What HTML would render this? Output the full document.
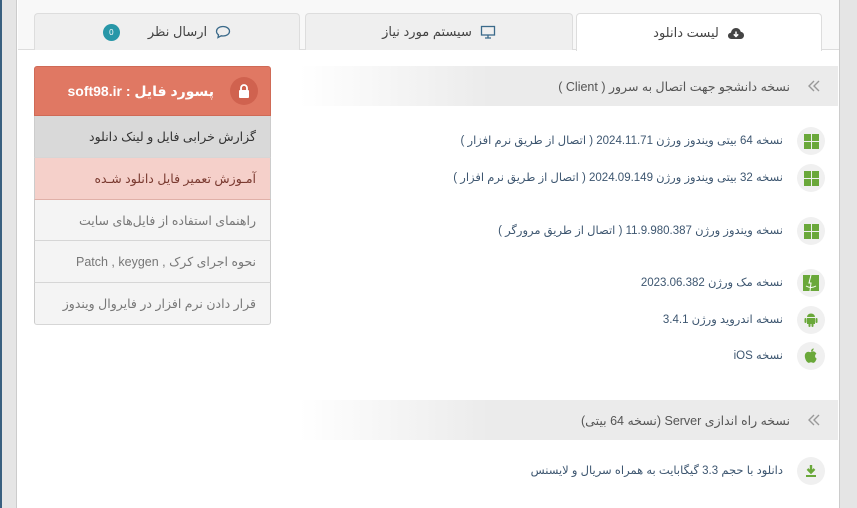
<!DOCTYPE html>
<html><head><meta charset="utf-8"><style>
*{margin:0;padding:0;box-sizing:border-box}
body{width:857px;height:508px;overflow:hidden;background:#fff;font-family:"Liberation Sans","DejaVu Sans",sans-serif;position:relative}
.abs{position:absolute}
.tab{position:absolute;top:13px;height:37px;background:#efefef;border:1px solid #ddd;border-bottom:none;border-radius:4px 4px 0 0;display:flex;align-items:center;justify-content:center;gap:8px;font-size:13px;color:#444;direction:rtl}
.tab.act{background:#fff;height:38px}
.hdr{position:absolute;left:300px;width:538px;height:40px;background:linear-gradient(to right,#fff,#ebebeb 35%);direction:rtl;display:flex;align-items:center;font-size:12.5px;color:#555}
.hdr .ch{width:48px;display:flex;justify-content:center}
.row{position:absolute;right:74px;direction:rtl;font-size:11.5px;color:#3d5670;white-space:nowrap}
.ic{position:absolute;left:797px;width:28px;height:28px;border-radius:50%;background:#f0f0f0;display:flex;align-items:center;justify-content:center}
.box{position:absolute;left:34px;width:237px;direction:rtl;font-size:12.5px;padding-right:14px;display:flex;align-items:center;border-left:1px solid #ccc;border-right:1px solid #ccc;border-bottom:1px solid #d6d6d6}
</style></head><body>
<div class="abs" style="left:0;top:0;width:2px;height:508px;background:#3a6080"></div>
<div class="abs" style="left:2px;top:0;width:15px;height:508px;background:#e5e5e5;border-right:1px solid #ccc"></div>
<div class="abs" style="left:839px;top:0;width:18px;height:508px;background:#e5e5e5;border-left:1px solid #ccc"></div>
<div class="abs" style="left:18px;top:0;width:821px;height:50px;background:#f8f8f8;border-bottom:1px solid #ddd"></div>

<div class="tab" style="left:34px;width:266px"><svg width="16" height="14" viewBox="0 0 16 14"><path d="M8 1.5C4.2 1.5 1.5 3.6 1.5 6.3c0 1.5.8 2.7 2 3.5L3 12.5l3.2-1.7c.6.1 1.2.2 1.8.2 3.8 0 6.5-2.1 6.5-4.7S11.8 1.5 8 1.5z" fill="none" stroke="#3b6a8a" stroke-width="1.3"/></svg><span>ارسال نظر</span><span style="width:17px;height:17px;border-radius:50%;background:#2897a8;color:#fff;font-size:8px;display:flex;align-items:center;justify-content:center;margin-right:20px">0</span></div>
<div class="tab" style="left:305px;width:268px"><svg width="16" height="14" viewBox="0 0 16 14"><rect x="1.5" y="1.5" width="13" height="8.5" fill="none" stroke="#3b6a8a" stroke-width="1.3"/><path d="M5 13h6M8 10v3" stroke="#3b6a8a" stroke-width="1.3"/></svg><span>سیستم مورد نیاز</span></div>
<div class="tab act" style="left:576px;width:246px"><svg width="18" height="14" viewBox="0 0 18 14"><path d="M4.5 13C2.3 13 1 11.6 1 9.8 1 8 2.4 6.8 4 6.8 4.3 4 6.4 2 9 2c2.4 0 4.3 1.6 4.8 3.9 2 .2 3.2 1.6 3.2 3.5 0 2-1.5 3.6-3.5 3.6z" fill="#444"/><path d="M9 5.5v5M6.8 8.3 9 10.5l2.2-2.2" stroke="#fff" stroke-width="1.5" fill="none"/></svg><span>لیست دانلود</span></div>

<div class="hdr" style="top:66px"><span class="ch"><svg width="14" height="14" viewBox="0 0 14 14"><path d="M7 2 2 7l5 5M12 2 7 7l5 5" stroke="#999" stroke-width="1.4" fill="none"/></svg></span><span>نسخه دانشجو جهت اتصال به سرور ( Client )</span></div>
<div class="hdr" style="top:400px"><span class="ch"><svg width="14" height="14" viewBox="0 0 14 14"><path d="M7 2 2 7l5 5M12 2 7 7l5 5" stroke="#999" stroke-width="1.4" fill="none"/></svg></span><span>نسخه راه اندازی Server (نسخه 64 بیتی)</span></div>

<div class="ic" style="top:127px"><svg width="15" height="15" viewBox="0 0 15 15" fill="#6aa83a"><rect x="0" y="0" width="7" height="7"/><rect x="8" y="0" width="7" height="7"/><rect x="0" y="8" width="7" height="7"/><rect x="8" y="8" width="7" height="7"/></svg></div>
<div class="row" style="top:133px">نسخه 64 بیتی ویندوز ورژن 2024.11.71 ( اتصال از طریق نرم افزار )</div>
<div class="ic" style="top:164px"><svg width="15" height="15" viewBox="0 0 15 15" fill="#6aa83a"><rect x="0" y="0" width="7" height="7"/><rect x="8" y="0" width="7" height="7"/><rect x="0" y="8" width="7" height="7"/><rect x="8" y="8" width="7" height="7"/></svg></div>
<div class="row" style="top:170px">نسخه 32 بیتی ویندوز ورژن 2024.09.149 ( اتصال از طریق نرم افزار )</div>
<div class="ic" style="top:217px"><svg width="15" height="15" viewBox="0 0 15 15" fill="#6aa83a"><rect x="0" y="0" width="7" height="7"/><rect x="8" y="0" width="7" height="7"/><rect x="0" y="8" width="7" height="7"/><rect x="8" y="8" width="7" height="7"/></svg></div>
<div class="row" style="top:223px">نسخه ویندوز ورژن 11.9.980.387 ( اتصال از طریق مرورگر )</div>
<div class="ic" style="top:269px"><svg width="16" height="16" viewBox="0 0 16 16"><rect width="16" height="16" fill="#6aa83a"/><path d="M8 0 6 8h2l-1 8" stroke="#fff" fill="none"/><path d="M3 11q5 3 10 0" stroke="#fff" fill="none"/></svg></div>
<div class="row" style="top:275px">نسخه مک ورژن 2023.06.382</div>
<div class="ic" style="top:306px"><svg width="14" height="16" viewBox="0 0 14 16" fill="#6aa83a"><path d="M3 5a4 3.5 0 0 1 8 0z"/><rect x="3" y="6" width="8" height="6"/><rect x="0.5" y="6" width="2" height="5" rx="1"/><rect x="11.5" y="6" width="2" height="5" rx="1"/><rect x="4.5" y="11" width="2" height="4" rx="1"/><rect x="7.5" y="11" width="2" height="4" rx="1"/></svg></div>
<div class="row" style="top:312px">نسخه اندروید ورژن 3.4.1</div>
<div class="ic" style="top:342px"><svg width="16" height="18" viewBox="0 0 14 16" fill="#6aa83a"><path d="M7 4.5c1-.6 2.5-.9 3.6 0 .6.4 1 1 1.2 1.5-1.5.8-1.7 3.4.2 4.3-.5 1.6-1.6 3.8-3 3.8-.9 0-1.1-.5-2-.5s-1.2.5-2 .5C3.4 14 1.5 10.8 1.5 8c0-2.6 1.8-3.8 3.2-3.8.9 0 1.6.6 2.300.3z"/><path d="M7 4c0-1.5 1-2.6 2.4-2.8C9.3 2.8 8.4 3.900 7 4z"/></svg></div>
<div class="row" style="top:348px">نسخه iOS</div>
<div class="ic" style="top:457px"><svg width="14" height="14" viewBox="0 0 14 14"><path d="M7 1v7M3.5 5 7 8.5 10.5 5" stroke="#6aa83a" stroke-width="2.4" fill="none"/><rect x="2" y="11" width="10" height="2" fill="#6aa83a"/></svg></div>
<div class="row" style="top:463px">دانلود با حجم 3.3 گیگابایت به همراه سریال و لایسنس</div>

<div class="box" style="top:66px;height:50px;background:#e07863;border:1px solid #cf6a56;border-radius:3px 3px 0 0;color:#fff;font-weight:bold;font-size:14px;padding-right:12px"><span style="width:28px;height:28px;border-radius:50%;background:#d0624f;display:flex;align-items:center;justify-content:center;margin-left:16px"><svg width="12" height="14" viewBox="0 0 12 14"><path d="M3 6V4a3 3 0 0 1 6 0v2" stroke="#fff" stroke-width="1.8" fill="none"/><rect x="1" y="6" width="10" height="8" rx="1" fill="#fff"/></svg></span>پسورد فایل : soft98.ir</div>
<div class="box" style="top:116px;height:42px;background:#d9d9d9;color:#333">گزارش خرابی فایل و لینک دانلود</div>
<div class="box" style="top:158px;height:42px;background:#f5d0ca;color:#7a3a30;border-bottom-color:#e0b0a8">آمـوزش تعمیر فایل دانلود شـده</div>
<div class="box" style="top:200px;height:41px;background:#f4f4f4;color:#777">راهنمای استفاده از فایل‌های سایت</div>
<div class="box" style="top:241px;height:42px;background:#f4f4f4;color:#777">نحوه اجرای کرک , Patch , keygen</div>
<div class="box" style="top:283px;height:42px;background:#f4f4f4;color:#777;border-radius:0 0 3px 3px">قرار دادن نرم افزار در فایروال ویندوز</div>
</body></html>
